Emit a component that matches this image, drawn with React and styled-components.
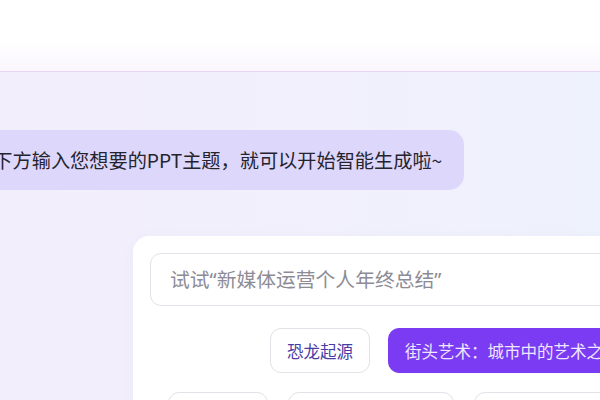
import React from "react";
import styled, { createGlobalStyle } from "styled-components";

const Global = createGlobalStyle`
  html, body { margin: 0; padding: 0; }
  body {
    width: 600px;
    height: 400px;
    overflow: hidden;
    font-family: "Noto Sans", "Noto Sans CJK SC", sans-serif;
  }
`;

const Page = styled.div`
  width: 600px;
  height: 400px;
  display: flex;
  flex-direction: column;
  overflow: hidden;
  background: linear-gradient(90deg, #f3eefc 0%, #f1f0fc 55%, #eef2fc 100%);
`;

const Header = styled.header`
  flex: none;
  height: 71px;
  background: linear-gradient(180deg, #ffffff 0px, #ffffff 40px, #faf6fd 71px);
  border-bottom: 1px solid #e8d6f4;
`;

const Main = styled.main`
  flex: 1;
  display: flex;
  flex-direction: column;
  align-items: flex-start;
  padding-top: 58px;
`;

const Bubble = styled.div`
  margin-left: -81px;
  height: 60px;
  padding: 0 22px 0 36px;
  display: flex;
  align-items: center;
  border-radius: 15px;
  background: #dcd7fb;
  color: #25232e;
  font-family: "Noto Sans CJK SC", "Noto Sans", sans-serif;
  font-size: 19.2px;
  white-space: nowrap;
`;

const Card = styled.section`
  margin-top: 46px;
  margin-left: 133px;
  width: 620px;
  flex: none;
  box-sizing: border-box;
  padding: 17px 17px 0 17px;
  background: #ffffff;
  border-radius: 16px;
  box-shadow: 0 2px 12px rgba(120, 100, 200, 0.05);
  display: flex;
  flex-direction: column;
`;

const Input = styled.input`
  box-sizing: border-box;
  width: 100%;
  height: 53px;
  border: 1px solid #e2e2e8;
  border-radius: 11px;
  padding: 0 0 0 19px;
  font-family: "Noto Sans", "Noto Sans CJK SC", sans-serif;
  font-size: 19.8px;
  color: #333;
  outline: none;
  background: #fff;
  &::placeholder {
    color: #8d8c96;
  }
`;

const Row = styled.div`
  display: flex;
  gap: ${(p) => p.$gap || 19}px;
  margin-top: ${(p) => p.$top}px;
  padding-left: ${(p) => p.$indent}px;
  white-space: nowrap;
`;

const Chip = styled.button`
  flex: none;
  box-sizing: border-box;
  height: 45px;
  padding: 0 16px;
  border-radius: 11px;
  border: 1px solid ${(p) => (p.$active ? "#7a3bf3" : "#e2e2e8")};
  background: ${(p) => (p.$active ? "#7a3bf3" : "#ffffff")};
  color: ${(p) => (p.$active ? "#efe6ff" : "#4a3aa6")};
  font-family: "Noto Sans CJK SC", "Noto Sans", sans-serif;
  font-size: 16.5px;
  display: flex;
  align-items: center;
  white-space: nowrap;
`;

export default function App() {
  return (
    <>
      <Global />
      <Page>
        <Header />
        <Main>
          <Bubble>请在下方输入您想要的PPT主题，就可以开始智能生成啦~</Bubble>
          <Card>
            <Input placeholder="试试“新媒体运营个人年终总结”" />
            <Row $top={22} $indent={120} $gap={18}>
              <Chip>恐龙起源</Chip>
              <Chip $active>街头艺术：城市中的艺术之美</Chip>
            </Row>
            <Row $top={19} $indent={18} $gap={20}>
              <Chip>时间管理</Chip>
              <Chip>人工智能发展趋势</Chip>
              <Chip>企业文化建设方案</Chip>
            </Row>
          </Card>
        </Main>
      </Page>
    </>
  );
}
